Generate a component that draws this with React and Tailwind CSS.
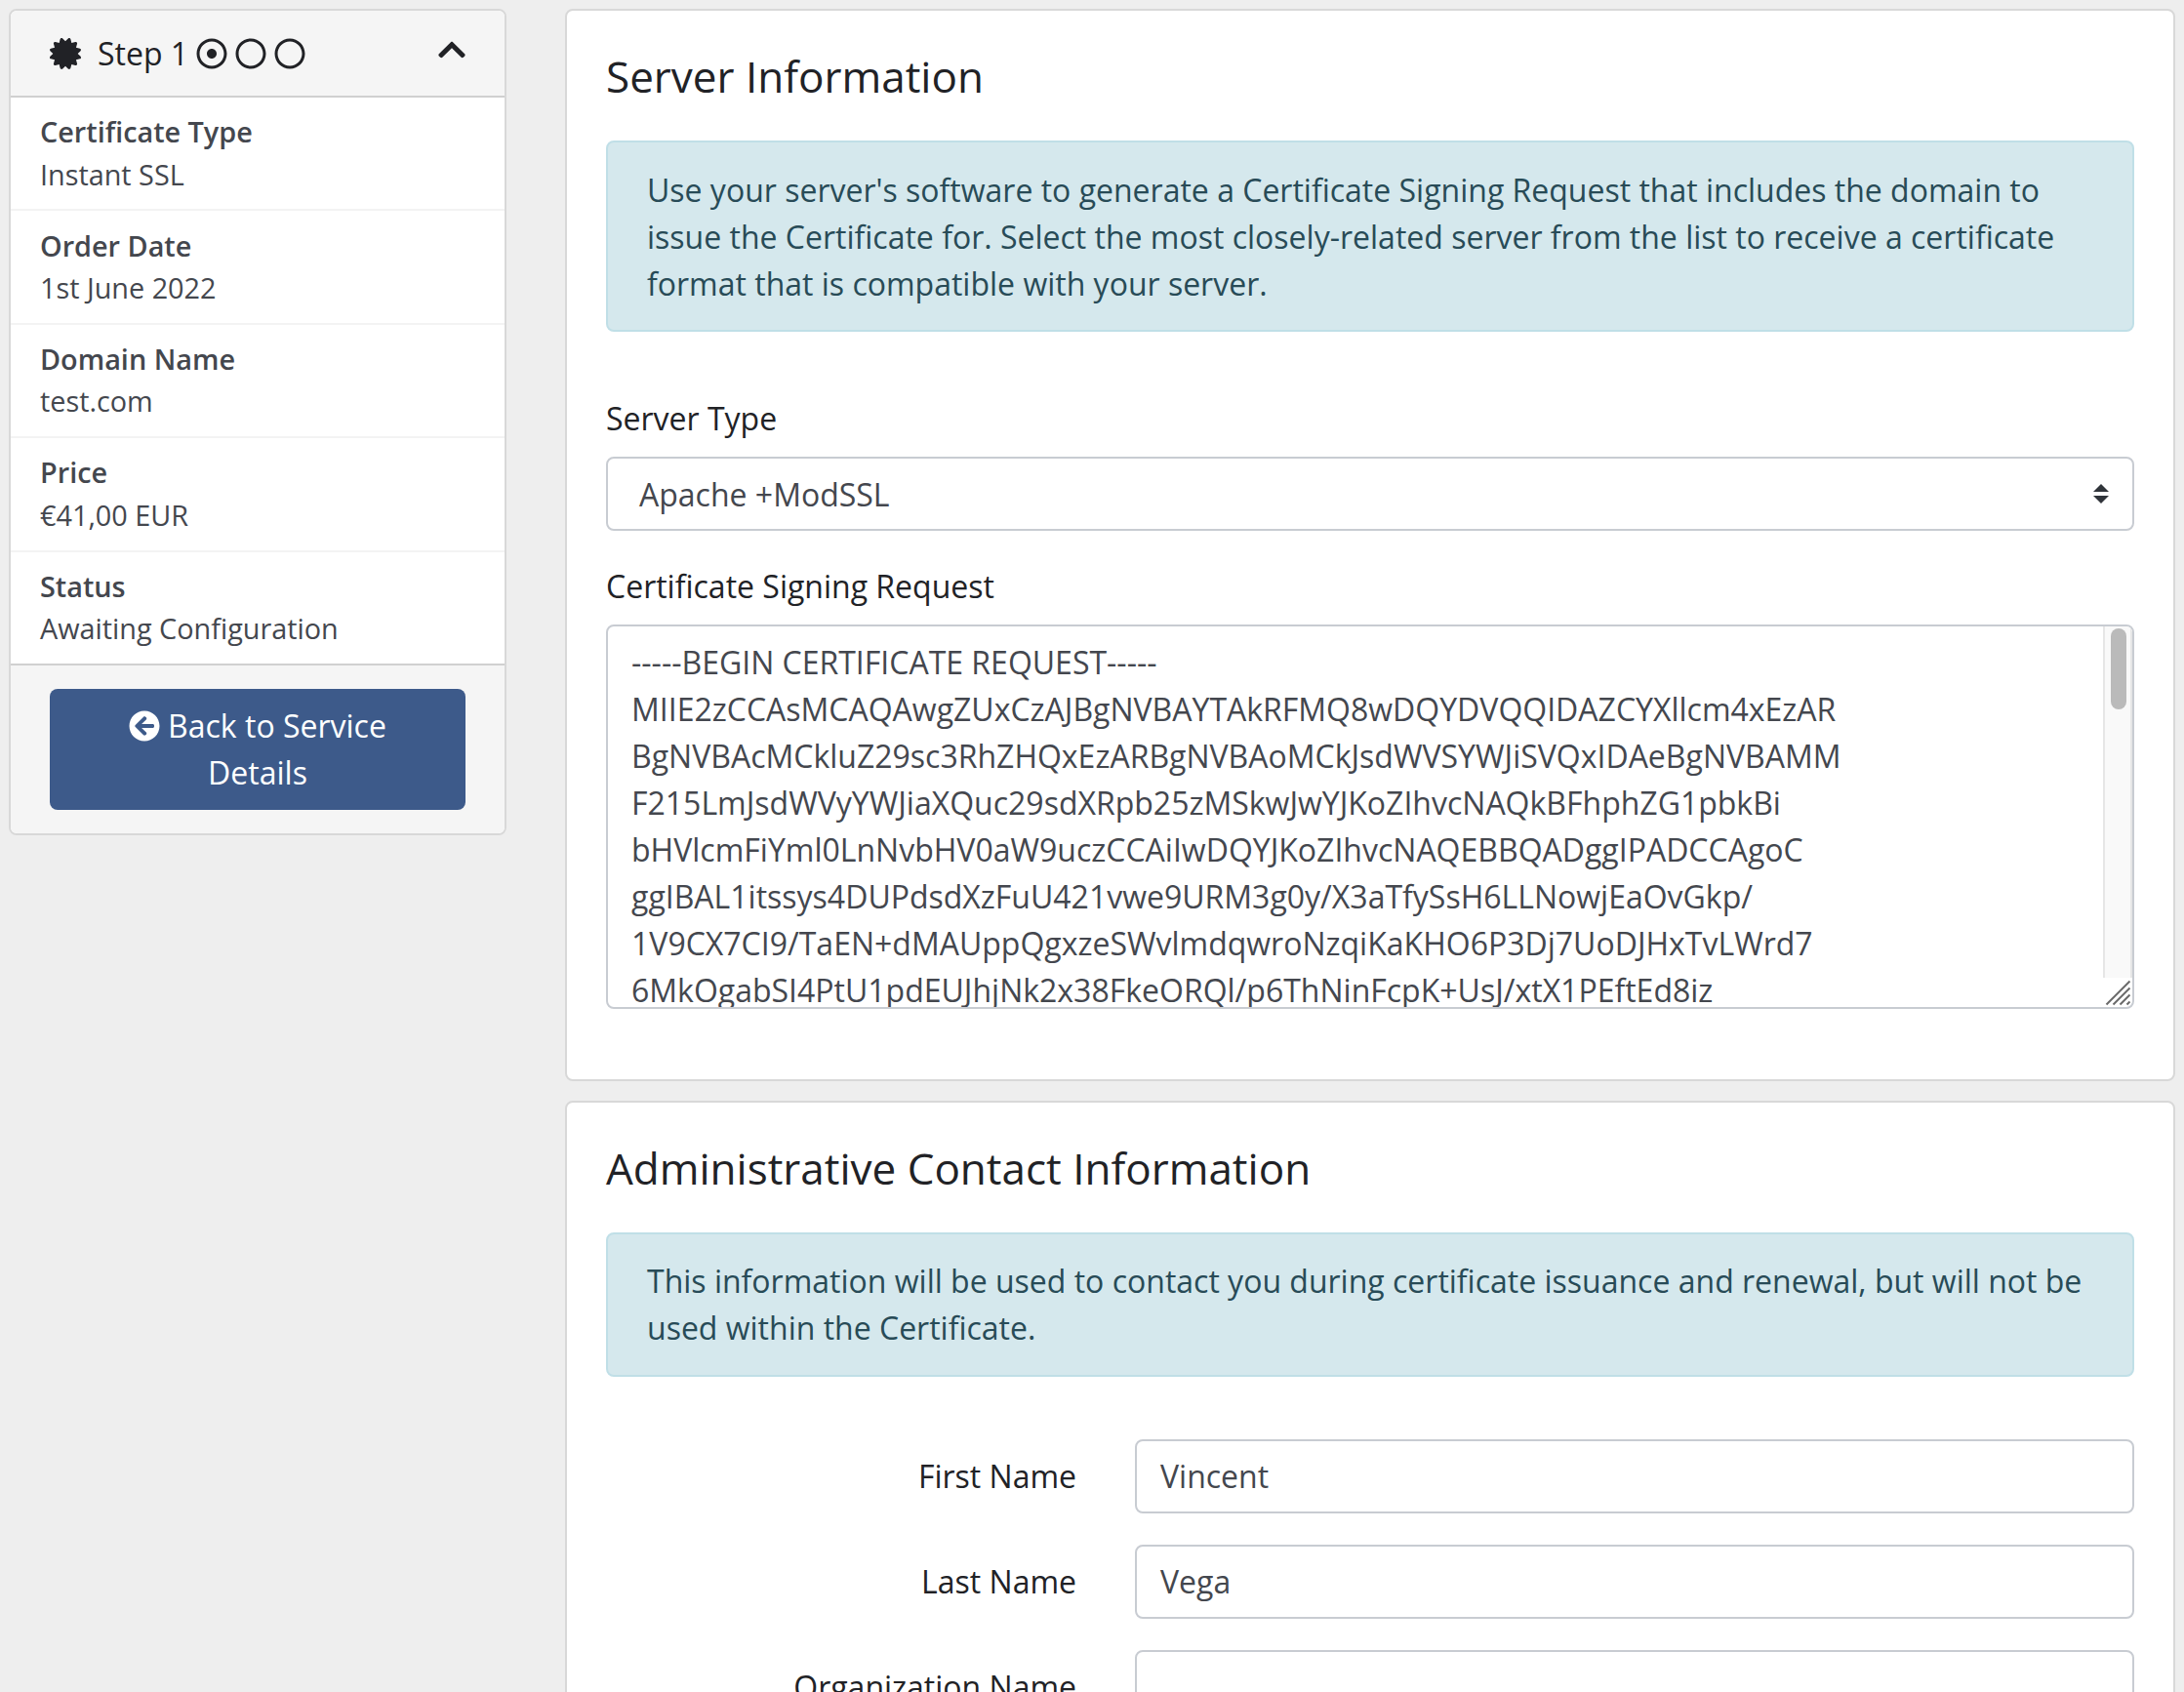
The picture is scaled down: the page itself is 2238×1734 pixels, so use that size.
import { FaCertificate, FaRegDotCircle, FaRegCircle, FaChevronUp, FaArrowCircleLeft } from "react-icons/fa";

const details = [
  ["Certificate Type", "Instant SSL"],
  ["Order Date", "1st June 2022"],
  ["Domain Name", "test.com"],
  ["Price", "€41,00 EUR"],
  ["Status", "Awaiting Configuration"],
];

const csr = [
  "-----BEGIN CERTIFICATE REQUEST-----",
  "MIIE2zCCAsMCAQAwgZUxCzAJBgNVBAYTAkRFMQ8wDQYDVQQIDAZCYXllcm4xEzAR",
  "BgNVBAcMCkluZ29sc3RhZHQxEzARBgNVBAoMCkJsdWVSYWJiSVQxIDAeBgNVBAMM",
  "F215LmJsdWVyYWJiaXQuc29sdXRpb25zMSkwJwYJKoZIhvcNAQkBFhphZG1pbkBi",
  "bHVlcmFiYml0LnNvbHV0aW9uczCCAiIwDQYJKoZIhvcNAQEBBQADggIPADCCAgoC",
  "ggIBAL1itssys4DUPdsdXzFuU421vwe9URM3g0y/X3aTfySsH6LLNowjEaOvGkp/",
  "1V9CX7CI9/TaEN+dMAUppQgxzeSWvlmdqwroNzqiKaKHO6P3Dj7UoDJHxTvLWrd7",
  "6MkOgabSI4PtU1pdEUJhjNk2x38FkeORQl/p6ThNinFcpK+UsJ/xtX1PEftEd8iz",
];

const contact = [
  ["First Name", "Vincent"],
  ["Last Name", "Vega"],
  ["Organization Name", ""],
];

function Sidebar() {
  return (
    <aside className="w-[510px] shrink-0 overflow-hidden rounded-[8px] border-2 border-[#d8d8d8] bg-white">
      <header className="flex h-[89px] items-center border-b-2 border-[#d0d0d0] bg-[#f5f5f5] pr-[38px] pl-10 text-[#212226]">
        <FaCertificate className="size-8" />
        <span className="ml-[17px] text-[32px] leading-[48px]">Step 1</span>
        <span className="ml-2 flex gap-2">
          <FaRegDotCircle className="size-8" />
          <FaRegCircle className="size-8" />
          <FaRegCircle className="size-8" />
        </span>
        <FaChevronUp className="mb-2 ml-auto size-8" />
      </header>
      <dl className="text-[28.8px] leading-[43.2px] text-[#44474e]">
        {details.map(([name, value], i) => (
          <div
            key={name}
            className={
              "h-[116.4px] border-b-2 px-[30px] pt-[13.3px] " +
              (i === details.length - 1 ? "border-[#d0d0d0]" : "border-[#f3f3f3]")
            }
          >
            <dt className="font-semibold">{name}</dt>
            <dd>{value}</dd>
          </div>
        ))}
      </dl>
      <footer className="bg-[#f5f5f5] px-10 py-6">
        <button className="block w-full rounded-[8px] bg-[#3d5a8a] px-10 py-3.5 text-center text-[32px] leading-[48px] text-white">
          <FaArrowCircleLeft className="mr-2 inline size-8 align-[-4px]" />
          Back to Service Details
        </button>
      </footer>
    </aside>
  );
}

function Card({ title, notice, noticePadding, children }) {
  return (
    <section className="rounded-[8px] border-2 border-[#d8d8d8] bg-white p-10">
      <h2 className="mb-[39px] pt-px text-[44px] leading-[53px] text-[#212226]">{title}</h2>
      <p className={"mb-16 rounded-[8px] border-2 border-[#c0dfe7] bg-[#d5e8ed] px-10 text-[#284b57] " + noticePadding}>
        {notice}
      </p>
      {children}
    </section>
  );
}

function Field({ padding, children }) {
  return (
    <div className={"h-[76px] rounded-[8px] border-2 border-[#c8ccd2] bg-white px-6 text-[#44474e] " + padding}>
      {children}
    </div>
  );
}

export default function App() {
  return (
    <div className="flex h-[1734px] items-start gap-[60px] overflow-hidden bg-[#eeeeee] px-[9px] pt-[9px] font-['Open_Sans',sans-serif] text-[32px] leading-[48px] text-[#212226]">
      <Sidebar />
      <main className="flex min-w-0 flex-1 flex-col gap-5">
        <Card
          title="Server Information"
          noticePadding="pt-[25px] pb-[23px]"
          notice="Use your server's software to generate a Certificate Signing Request that includes the domain to issue the Certificate for. Select the most closely-related server from the list to receive a certificate format that is compatible with your server."
        >
          <div className="mb-8">
            <div className="mb-[15px] pt-px">Server Type</div>
            <Field padding="pt-3">
              <div className="flex items-center justify-between pl-2">
                <span className="pt-px -mb-px">Apache +ModSSL</span>
                <svg viewBox="0 0 16 20" className="h-5 w-4 fill-[#30343a]">
                  <path d="M0 8 8 0l8 8zM0 12h16l-8 8z" />
                </svg>
              </div>
            </Field>
          </div>
          <div className="mb-8">
            <div className="mb-[15px] pt-px">Certificate Signing Request</div>
            <div className="flex h-[394px] overflow-hidden rounded-[8px] border-2 border-[#c8ccd2]">
              <div className="flex-1 pt-[13px] pl-6 text-[#44474e]">
                {csr.map((line) => (
                  <div key={line} className="whitespace-nowrap">
                    {line}
                  </div>
                ))}
              </div>
              <div className="flex w-[30px] flex-col">
                <div className="flex h-[360px] justify-center border-x-2 border-[#e6e6e6] bg-[#f9f9f9] pt-0.5 pl-0.5">
                  <div className="h-[83px] w-4 rounded-full bg-[#bababa]" />
                </div>
                <svg viewBox="0 0 30 30" className="size-[30px] stroke-[#6a6a6a]" strokeWidth="2">
                  <path d="M3.5 27.5 27.5 3.5M10.5 27.5l17-17M17.5 27.5l10-10M24.5 27.5l3-3" />
                </svg>
              </div>
            </div>
          </div>
        </Card>
        <Card
          title="Administrative Contact Information"
          noticePadding="py-6"
          notice="This information will be used to contact you during certificate issuance and renewal, but will not be used within the Certificate."
        >
          <div className="flex flex-col gap-8">
            {contact.map(([label, value]) => (
              <div key={label} className="grid grid-cols-[482px_1fr] items-center gap-[60px]">
                <div className="text-right">{label}</div>
                <Field padding="py-3">{value}</Field>
              </div>
            ))}
          </div>
        </Card>
      </main>
    </div>
  );
}
